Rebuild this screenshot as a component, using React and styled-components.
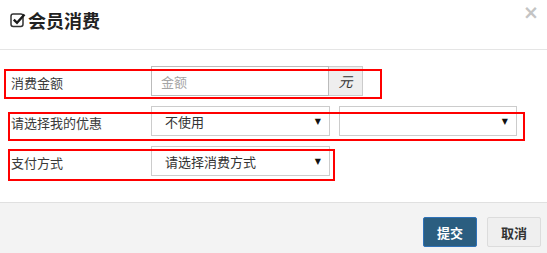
import React from 'react';
import styled, { createGlobalStyle } from 'styled-components';

const Global = createGlobalStyle`
  html, body {
    margin: 0;
    padding: 0;
    background: #fff;
  }
  body {
    font-family: "Liberation Sans", "Noto Sans CJK SC", sans-serif;
    color: #333;
  }
`;

/* 样式 */
const Modal = styled.div`
  width: 547px;
  height: 253px;
  display: flex;
  flex-direction: column;
  background: #fff;
`;

const Header = styled.div`
  height: 49px;
  border-bottom: 1px solid #e5e5e5;
  display: flex;
  align-items: center;
  justify-content: space-between;
  padding: 0 8px 0 10px;
  box-sizing: content-box;
`;

const Title = styled.h4`
  margin: 0 0 9px;
  display: flex;
  align-items: center;
  gap: 1px;
  font-size: 18px;
  font-weight: bold;
  color: #222;
  font-family: "Noto Sans CJK SC", sans-serif;
`;

const Close = styled.button`
  align-self: flex-start;
  margin-top: 3px;
  border: 0;
  background: none;
  padding: 0;
  font-size: 19px;
  line-height: 1;
  font-weight: bold;
  color: #c4c4c4;
  font-family: "DejaVu Sans", sans-serif;
`;

const Body = styled.div`
  flex: 1;
  padding: 16px 0 0;
  display: flex;
  flex-direction: column;
  gap: 10px;
`;

const FieldRow = styled.div`
  position: relative;
  height: 30px;
  display: flex;
  align-items: center;
`;

const Label = styled.div`
  width: 140px;
  padding-left: 11px;
  font-size: 13px;
  color: #3a3a3a;
  font-family: "Noto Sans CJK SC", sans-serif;
  margin-top: ${p => p.$shift || 0}px;
`;

const Controls = styled.div`
  display: flex;
  gap: 9px;
  height: 30px;
`;

const InputGroup = styled.div`
  display: flex;
  height: 30px;
`;

const TextInput = styled.input`
  width: 178px;
  height: 30px;
  box-sizing: border-box;
  border: 1px solid #bbb;
  padding: 0 9px;
  font-size: 13px;
  font-family: "Noto Sans CJK SC", sans-serif;
  outline: none;
  &::placeholder {
    color: #a5a5a5;
  }
`;

const Addon = styled.span`
  width: 34px;
  height: 30px;
  box-sizing: border-box;
  border: 1px solid #ccc;
  border-left: 0;
  background: #eee;
  display: flex;
  align-items: center;
  justify-content: center;
  font-size: 14px;
  font-style: italic;
  color: #333;
  font-family: "Noto Sans CJK SC", sans-serif;
`;

const Select = styled.div`
  width: ${p => p.$width}px;
  height: 30px;
  box-sizing: border-box;
  border: 1px solid #ccc;
  display: flex;
  align-items: center;
  justify-content: space-between;
  padding: 0 8px 0 13px;
  font-size: 13px;
  color: #333;
  font-family: "Noto Sans CJK SC", sans-serif;
`;

const Arrow = styled.span`
  font-size: 8px;
  color: #111;
  font-family: "DejaVu Sans", sans-serif;
`;

const Outline = styled.div`
  position: absolute;
  top: ${p => p.$top}px;
  left: ${p => p.$left}px;
  width: ${p => p.$width}px;
  height: ${p => p.$height}px;
  box-sizing: border-box;
  border: 2px solid #f00;
  pointer-events: none;
`;

const Footer = styled.div`
  height: 51px;
  border-top: 1px solid #e0e0e0;
  background: #f3f3f3;
  display: flex;
  justify-content: flex-end;
  align-items: flex-start;
  gap: 10px;
  padding: 14px 6px 0 0;
  box-sizing: border-box;
`;

const Button = styled.button`
  height: 30px;
  width: 54px;
  box-sizing: border-box;
  border: 1px solid ${p => (p.$primary ? '#2f72b8' : '#dcdcdc')};
  background: ${p => (p.$primary ? '#2b5e80' : '#efefef')};
  color: ${p => (p.$primary ? '#fff' : '#333')};
  font-size: 13px;
  font-weight: bold;
  font-family: "Noto Sans CJK SC", sans-serif;
  border-radius: 2px;
  padding: 0;
`;

const CheckIcon = () => (
  <svg width="17" height="16" viewBox="0 0 17 16">
    <rect x="1" y="2" width="12" height="12.5" rx="2.2" fill="none" stroke="#333" strokeWidth="1.5" />
    <path d="M3.8 7.6 L7 10.8 L14.5 2.5" fill="none" stroke="#1a1a1a" strokeWidth="2.4" />
  </svg>
);

const App = function App() {
  return (
    <Modal>
      <Global />
      <Header>
        <Title>
          <CheckIcon />
          会员消费
        </Title>
        <Close>×</Close>
      </Header>
      <Body>
        <FieldRow>
          <Label $shift={3}>消费金额</Label>
          <InputGroup>
            <TextInput placeholder="金额" />
            <Addon>元</Addon>
          </InputGroup>
          <Outline $top={3} $left={4} $width={378} $height={30} />
        </FieldRow>
        <FieldRow>
          <Label $shift={2}>请选择我的优惠</Label>
          <Controls>
            <Select $width={179}>
              不使用
              <Arrow>▼</Arrow>
            </Select>
            <Select $width={178}>
              <span />
              <Arrow>▼</Arrow>
            </Select>
          </Controls>
          <Outline $top={6} $left={8} $width={517} $height={29} />
        </FieldRow>
        <FieldRow>
          <Label $shift={2}>支付方式</Label>
          <Select $width={179}>
            请选择消费方式
            <Arrow>▼</Arrow>
          </Select>
          <Outline $top={3} $left={8} $width={327} $height={32} />
        </FieldRow>
      </Body>
      <Footer>
        <Button $primary>提交</Button>
        <Button>取消</Button>
      </Footer>
    </Modal>
  );
};

export default App;
